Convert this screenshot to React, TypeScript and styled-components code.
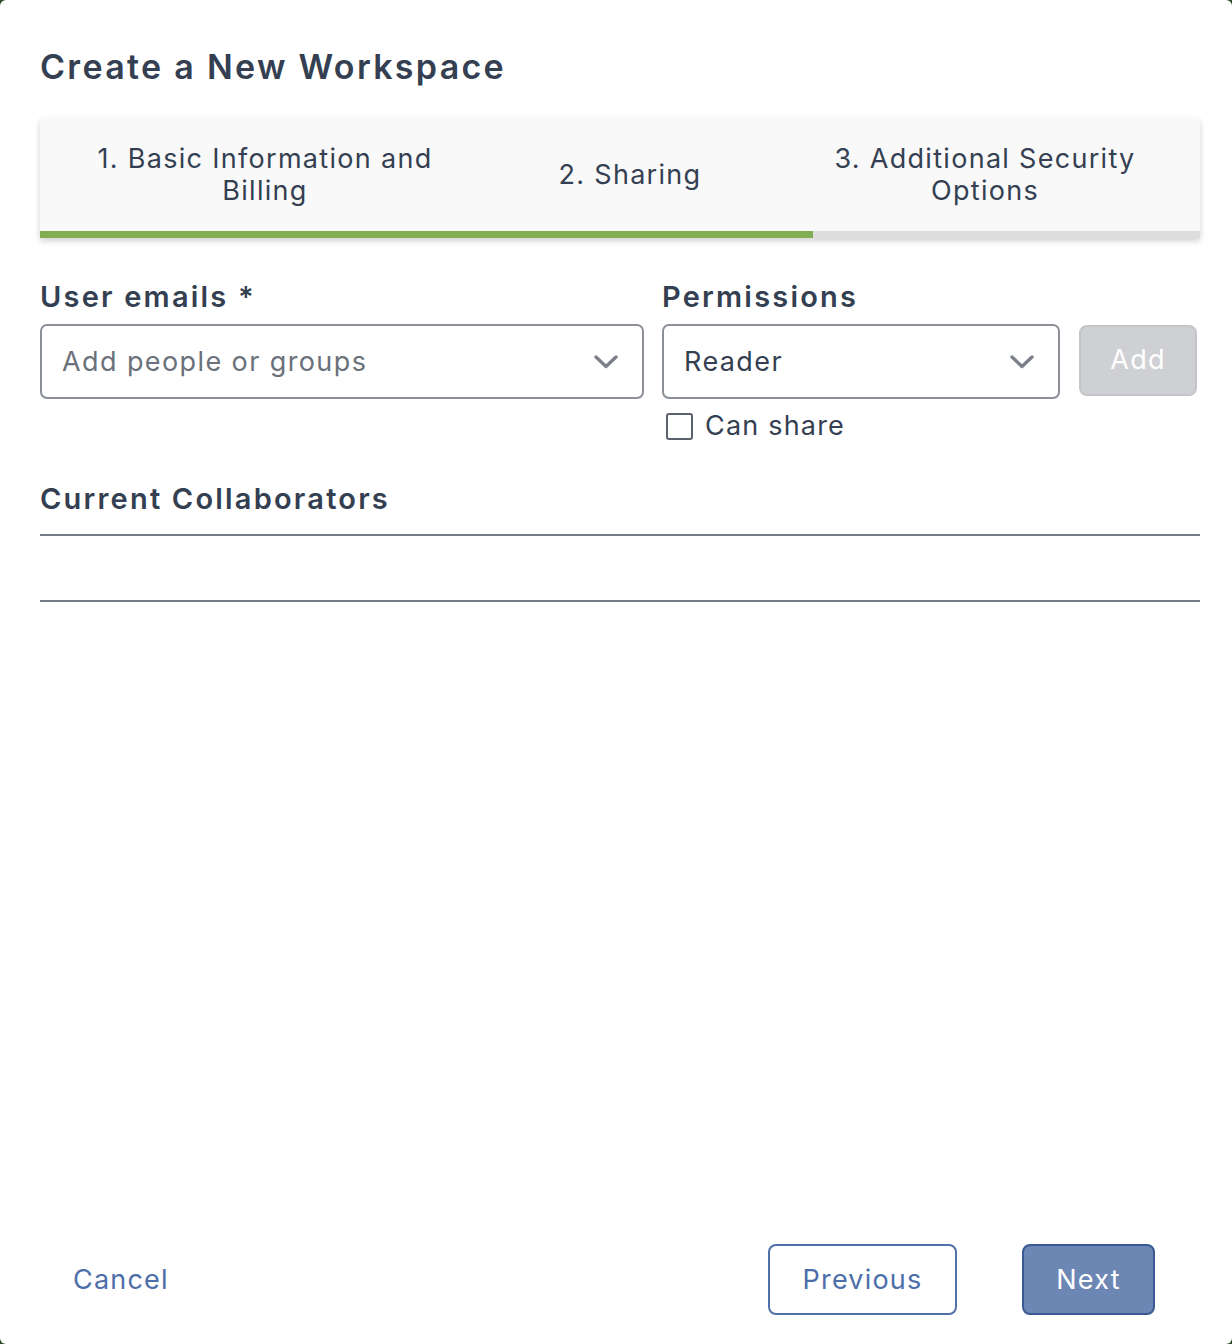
import React, { useState } from 'react';
import styled, { createGlobalStyle } from 'styled-components';

const GlobalStyle = createGlobalStyle`
  html, body {
    margin: 0;
    padding: 0;
    background: #2f4a22;
  }
  body {
    font-family: Inter, "Noto Sans", "Liberation Sans", sans-serif;
    color: #343f52;
  }
  * { box-sizing: border-box; }
`;

const Modal = styled.div`
  width: 1232px;
  min-height: 1344px;
  background: #fff;
  border-radius: 6px;
  padding: 0 32px 29px 40px;
  display: flex;
  flex-direction: column;
`;

const Title = styled.h1`
  margin: 46px 0 30px;
  font-size: 34px;
  line-height: 42px;
  font-weight: 600;
  letter-spacing: 2.3px;
  color: #343f52;
`;

const Stepper = styled.div`
  background: #f9f9f9;
  box-shadow: 0 3px 6px rgba(0, 0, 0, 0.18);
`;

const StepRow = styled.div`
  display: grid;
  grid-template-columns: 450px 280px 430px;
  height: 113px;
`;

const Step = styled.div`
  display: flex;
  align-items: center;
  justify-content: center;
  text-align: center;
  font-size: 27px;
  line-height: 32px;
  letter-spacing: 1.3px;
  color: #343f52;
  padding: 0 40px;
`;

const Progress = styled.div`
  height: 7px;
  background: #dddddd;
`;

const ProgressFill = styled.div`
  height: 100%;
  background: #82ad50;
`;

const FormGrid = styled.div`
  display: grid;
  grid-template-columns: 604px 398px 118px;
  column-gap: 18px;
  margin-top: 41px;
`;

const Field = styled.div`
  display: flex;
  flex-direction: column;
`;

const Label = styled.label`
  font-size: 29px;
  line-height: 36px;
  font-weight: 600;
  letter-spacing: 2.2px;
  color: #343f52;
  margin-bottom: 9px;
`;

const Select = styled.div<{ $placeholder?: boolean }>`
  height: 75px;
  border: 2px solid #8c9199;
  border-radius: 7px;
  display: flex;
  align-items: center;
  justify-content: space-between;
  padding: 0 24px 0 20px;
  font-size: 27px;
  letter-spacing: 1.4px;
  color: ${(p) => (p.$placeholder ? '#6b717b' : '#343f52')};
  background: #fff;
`;

const AddButton = styled.button`
  align-self: start;
  margin-top: 46px;
  margin-left: 1px;
  height: 71px;
  width: 118px;
  border: 2px solid #c3c5c9;
  border-radius: 8px;
  background: #cfd0d3;
  color: #fff;
  font-family: inherit;
  font-size: 27px;
  letter-spacing: 1.3px;
  padding: 0 0 2px;
`;

const CheckRow = styled.label`
  display: flex;
  align-items: center;
  gap: 12px;
  margin-top: 12px;
  margin-left: 4px;
  font-size: 27px;
  line-height: 30px;
  letter-spacing: 1.2px;
  color: #343f52;
`;

const Box = styled.span<{ $checked: boolean }>`
  width: 27px;
  height: 27px;
  border: 2px solid #5b626d;
  border-radius: 3px;
  background: ${(p) => (p.$checked ? '#4d6ea8' : '#fff')};
`;

const SectionTitle = styled.h2`
  margin: 40px 0 0;
  padding-bottom: 17px;
  border-bottom: 2px solid #777d87;
  font-size: 29px;
  line-height: 36px;
  font-weight: 600;
  letter-spacing: 2.2px;
  color: #343f52;
`;

const CollaboratorList = styled.div`
  height: 66px;
  border-bottom: 2px solid #777d87;
`;

const Footer = styled.div`
  margin-top: auto;
  display: flex;
  align-items: center;
  padding-right: 45px;
`;

const LinkButton = styled.button`
  border: none;
  background: none;
  color: #4d6ea8;
  font-family: inherit;
  font-size: 27px;
  letter-spacing: 1.2px;
  padding: 0;
  margin-left: 33px;
  margin-right: auto;
`;

const FooterButton = styled.button<{ $primary?: boolean }>`
  height: 71px;
  padding: 0 28px;
  min-width: ${(p) => (p.$primary ? '133px' : '189px')};
  border-radius: 8px;
  border: 2px solid ${(p) => (p.$primary ? '#3b5a95' : '#5070aa')};
  background: ${(p) => (p.$primary ? '#6d87b4' : '#fff')};
  color: ${(p) => (p.$primary ? '#fff' : '#4d6ea8')};
  font-family: inherit;
  font-size: 27px;
  letter-spacing: 1.2px;
  & + & {
    margin-left: 65px;
  }
`;

const Chevron = () => (
  <svg width="24" height="14" viewBox="0 0 24 14" fill="none">
    <path d="M2 2 L12 11.5 L22 2" stroke="#7c8189" strokeWidth="3.4" strokeLinecap="round" strokeLinejoin="round" />
  </svg>
);

const steps = ['1. Basic Information and Billing', '2. Sharing', '3. Additional Security Options'];

export default function App() {
  const [canShare, setCanShare] = useState(false);
  const current = 2;

  return (
    <>
      <GlobalStyle />
      <Modal>
        <Title>Create a New Workspace</Title>

        <Stepper>
          <StepRow>
            {steps.map((s) => (
              <Step key={s}>{s}</Step>
            ))}
          </StepRow>
          <Progress>
            <ProgressFill style={{ width: `${(current / steps.length) * 100}%` }} />
          </Progress>
        </Stepper>

        <FormGrid>
          <Field>
            <Label>User emails *</Label>
            <Select $placeholder>
              Add people or groups
              <Chevron />
            </Select>
          </Field>
          <Field>
            <Label>Permissions</Label>
            <Select>
              Reader
              <Chevron />
            </Select>
            <CheckRow onClick={() => setCanShare(!canShare)}>
              <Box $checked={canShare} />
              Can share
            </CheckRow>
          </Field>
          <AddButton disabled>Add</AddButton>
        </FormGrid>

        <SectionTitle>Current Collaborators</SectionTitle>
        <CollaboratorList />

        <Footer>
          <LinkButton>Cancel</LinkButton>
          <FooterButton>Previous</FooterButton>
          <FooterButton $primary>Next</FooterButton>
        </Footer>
      </Modal>
    </>
  );
}
